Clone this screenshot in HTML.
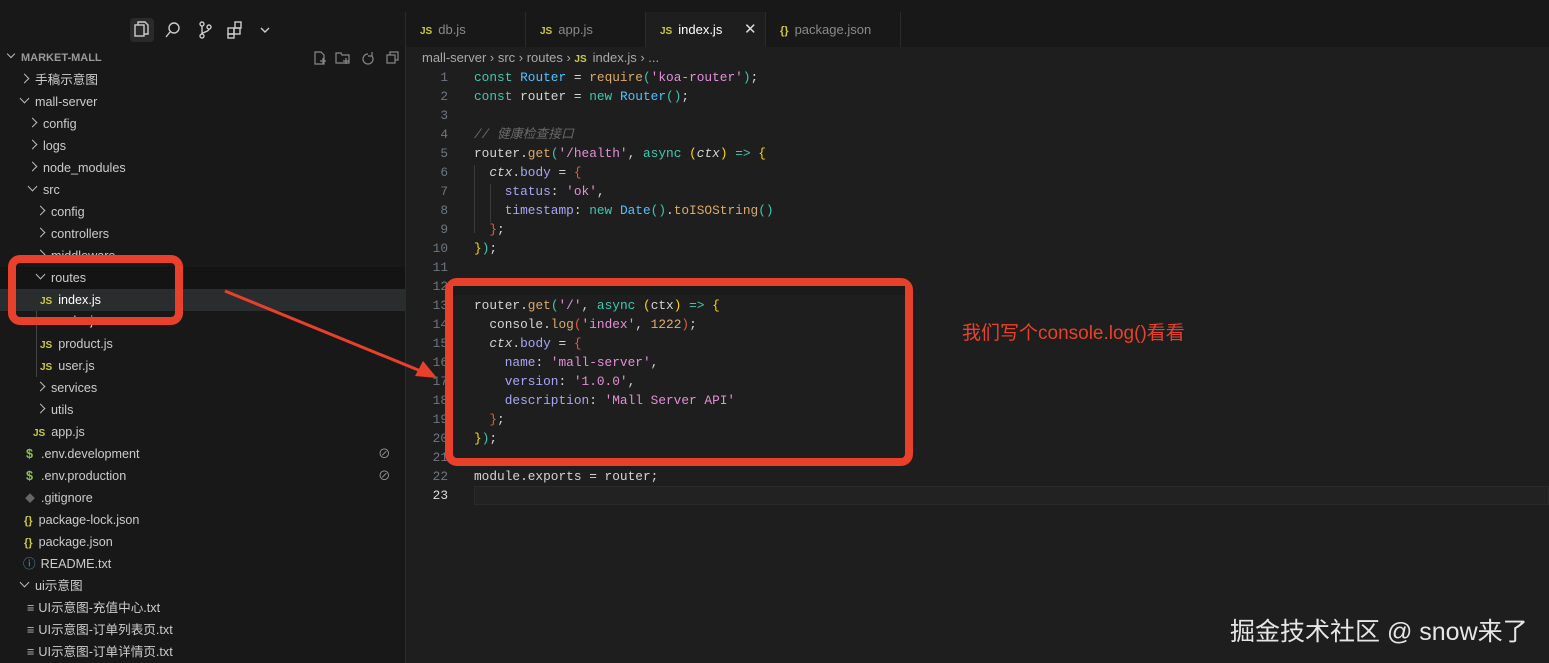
<!DOCTYPE html>
<html><head><meta charset="utf-8"><style>
body{margin:0;width:1549px;height:663px;overflow:hidden;background:#1e1e1e;font-family:"Liberation Sans","Noto Sans CJK SC",sans-serif;position:relative}
.abs{position:absolute}
#top{left:0;top:0;width:1549px;height:12px;background:#181818}
#side{left:0;top:12px;width:405px;height:651px;background:#181818;border-right:1px solid #2b2b2b;overflow:hidden}
.row{position:absolute;left:0;width:405px;box-sizing:border-box;height:22px;line-height:22px;font-size:12.6px;color:#cccccc;white-space:nowrap}
.chev{display:inline-block;width:6px;height:6px;border-right:1.3px solid #bbb;border-bottom:1.3px solid #bbb;margin-right:7px;vertical-align:2px}
.r{transform:rotate(-45deg)}.d{transform:rotate(45deg);vertical-align:4px}
.js{color:#cbcb41;font-weight:bold;font-size:10px;margin-right:6px}
.br{color:#cbcb41;font-weight:bold;font-size:11px;margin-right:6px}
#tabs{left:406px;top:12px;width:1143px;height:35px;background:#181818}
.tab{position:absolute;top:0;height:35px;line-height:35px;font-size:13px;color:#8a8a8a;border-right:1px solid #2b2b2b;box-sizing:border-box;padding-left:14px}
#code{left:406px;top:68px;font-family:"Liberation Mono",monospace;font-size:12.8px}
.ln{position:absolute;left:0;width:42px;text-align:right;color:#6e7681;height:19px;line-height:19px;font-family:"Liberation Mono",monospace;font-size:12.8px}
.cl{position:absolute;left:68px;height:19px;line-height:19px;color:#d4d4d4;white-space:pre;font-family:"Liberation Mono",monospace;font-size:12.8px}
.k{color:#3dc9b0}.t{color:#4fc1ff}.f{color:#dcaa6a}.s{color:#e48fd8}.p{color:#a6a6f7}.c{color:#6a6a6a;font-style:italic}.y{color:#ffd700}.g{color:#3dc9b0}.rd{color:#e45b3d}.n{color:#e0b070}.i{color:#d4d4d4;font-style:italic}
.box{position:absolute;border:8px solid #e8402a;border-radius:12px;box-sizing:border-box}
</style></head><body>
<div id="top" class="abs"></div>
<div id="side" class="abs">
 <div class="abs" style="left:130px;top:6px;width:24px;height:24px;background:#2a2a2a;border-radius:4px"></div>
 <svg class="abs" style="left:131px;top:8px" width="140" height="20" viewBox="0 0 140 20" fill="none" stroke="#ccc" stroke-width="1.4">
  <rect x="4" y="5" width="9" height="11"/><path d="M7 5V2h7l3 3v9h-4"/>
  <circle cx="43" cy="8" r="5"/><path d="M39 12l-4 5"/>
  <circle cx="71" cy="4" r="2"/><circle cx="71" cy="16" r="2"/><circle cx="78" cy="7" r="2"/><path d="M71 6v8M78 9c0 3-7 3-7 5"/>
  <rect x="97" y="8" width="6" height="6"/><rect x="103" y="8" width="6" height="6"/><rect x="97" y="14" width="6" height="4"/><rect x="104" y="2" width="6" height="6"/>
  <path d="M130 8l4 4 4-4"/>
 </svg>
 <div class="row" style="top:35px;font-size:11px;font-weight:bold;color:#999;padding-left:8px"><span class="chev d" style="width:5px;height:5px"></span>MARKET-MALL</div>
 <svg class="abs" style="left:312px;top:38px" width="90" height="16" fill="none" stroke="#888" stroke-width="1.2"><path d="M3 2h6l3 3v9H3zM8 11h6M11 8v6"/><path d="M24 3h5l1 2h7v8h-13zM31 11h6M34 8v6"/><path d="M56 4a5 5 0 1 0 4 2M60 2v4h-4"/><rect x="75" y="5" width="8" height="8"/><path d="M78 5V2h8v8h-3"/></svg>
 <div class="row" style="top:57px;padding-left:21px"><span class="chev r"></span>手稿示意图</div>
 <div class="row" style="top:79px;padding-left:21px"><span class="chev d"></span>mall-server</div>
 <div class="row" style="top:101px;padding-left:29px"><span class="chev r"></span>config</div>
 <div class="row" style="top:123px;padding-left:29px"><span class="chev r"></span>logs</div>
 <div class="row" style="top:145px;padding-left:29px"><span class="chev r"></span>node_modules</div>
 <div class="row" style="top:167px;padding-left:29px"><span class="chev d"></span>src</div>
 <div class="row" style="top:189px;padding-left:37px"><span class="chev r"></span>config</div>
 <div class="row" style="top:211px;padding-left:37px"><span class="chev r"></span>controllers</div>
 <div class="row" style="top:233px;padding-left:37px;height:10px;overflow:hidden"><span class="chev r"></span>middleware</div>
 <div class="row" style="top:255px;padding-left:37px;background:#141414"><span class="chev d"></span>routes</div>
 <div class="row" style="top:277px;padding-left:40px;background:#2a2d2e;color:#fff"><span class="js">JS</span>index.js</div>
 <div class="row" style="top:303px;padding-left:58px;height:14px;overflow:hidden;line-height:12px">order.js</div>
 <div class="abs" style="left:36px;top:299px;width:1px;height:66px;background:#444"></div>
 <div class="row" style="top:321px;padding-left:40px"><span class="js">JS</span>product.js</div>
 <div class="row" style="top:343px;padding-left:40px"><span class="js">JS</span>user.js</div>
 <div class="row" style="top:365px;padding-left:37px"><span class="chev r"></span>services</div>
 <div class="row" style="top:387px;padding-left:37px"><span class="chev r"></span>utils</div>
 <div class="row" style="top:409px;padding-left:33px"><span class="js">JS</span>app.js</div>
 <div class="row" style="top:431px;padding-left:26px"><span style="color:#8dc149;font-weight:bold;margin-right:8px">$</span>.env.development<span class="abs" style="left:378px;color:#999">⊘</span></div>
 <div class="row" style="top:453px;padding-left:26px"><span style="color:#8dc149;font-weight:bold;margin-right:8px">$</span>.env.production<span class="abs" style="left:378px;color:#999">⊘</span></div>
 <div class="row" style="top:475px;padding-left:25px"><span style="color:#666;margin-right:6px;font-size:10px">◆</span>.gitignore</div>
 <div class="row" style="top:497px;padding-left:24px"><span class="br">{}</span>package-lock.json</div>
 <div class="row" style="top:519px;padding-left:24px"><span class="br">{}</span>package.json</div>
 <div class="row" style="top:541px;padding-left:23px"><span style="color:#519aba;margin-right:5px">ⓘ</span>README.txt</div>
 <div class="row" style="top:563px;padding-left:21px"><span class="chev d"></span>ui示意图</div>
 <div class="row" style="top:585px;padding-left:27px"><span style="color:#bbb;margin-right:4px">≡</span>UI示意图-充值中心.txt</div>
 <div class="row" style="top:607px;padding-left:27px"><span style="color:#bbb;margin-right:4px">≡</span>UI示意图-订单列表页.txt</div>
 <div class="row" style="top:629px;padding-left:27px"><span style="color:#bbb;margin-right:4px">≡</span>UI示意图-订单详情页.txt</div>
</div>
<div id="tabs" class="abs">
 <div class="tab" style="left:0;width:120px"><span class="js">JS</span>db.js</div>
 <div class="tab" style="left:120px;width:120px"><span class="js">JS</span>app.js</div>
 <div class="tab" style="left:240px;width:120px;background:#1e1e1e;color:#fff">
  <span class="js">JS</span>index.js<span class="abs" style="left:98px;color:#ddd;font-size:15px">✕</span></div>
 <div class="tab" style="left:360px;width:135px"><span class="br">{}</span>package.json</div>
</div>
<div class="abs" style="left:422px;top:48px;font-size:13px;color:#a9a9a9;line-height:20px">mall-server › src › routes › <span class="js">JS</span>index.js › ...</div>
<div id="code" class="abs">
 <div class="ln" style="top:0">1</div><div class="cl" style="top:0"><span class="k">const</span> <span class="t">Router</span> = <span class="f">require</span><span class="g">(</span><span class="s">'koa-router'</span><span class="g">)</span>;</div>
 <div class="ln" style="top:19px">2</div><div class="cl" style="top:19px"><span class="k">const</span> router = <span class="k">new</span> <span class="t">Router</span><span class="g">()</span>;</div>
 <div class="ln" style="top:38px">3</div>
 <div class="ln" style="top:57px">4</div><div class="cl c" style="top:57px;font-family:'Liberation Mono','Noto Sans CJK SC',monospace">// 健康检查接口</div>
 <div class="ln" style="top:76px">5</div><div class="cl" style="top:76px">router.<span class="f">get</span><span class="g">(</span><span class="s">'/health'</span>, <span class="k">async</span> <span class="y">(</span><span class="i">ctx</span><span class="y">)</span> <span class="k">=&gt;</span> <span class="y">{</span></div>
 <div class="ln" style="top:95px">6</div><div class="cl" style="top:95px">  <span class="i">ctx</span>.<span class="p">body</span> = <span class="rd">{</span></div>
 <div class="ln" style="top:114px">7</div><div class="cl" style="top:114px">    <span class="p">status</span>: <span class="s">'ok'</span>,</div>
 <div class="ln" style="top:133px">8</div><div class="cl" style="top:133px">    <span class="p">timestamp</span>: <span class="k">new</span> <span class="t">Date</span><span class="g">()</span>.<span class="f">toISOString</span><span class="g">()</span></div>
 <div class="ln" style="top:152px">9</div><div class="cl" style="top:152px">  <span class="rd">}</span>;</div>
 <div class="ln" style="top:171px">10</div><div class="cl" style="top:171px"><span class="y">}</span><span class="g">)</span>;</div>
 <div class="ln" style="top:190px">11</div>
 <div class="ln" style="top:209px">12</div><div class="cl c" style="top:209px;font-family:'Liberation Mono','Noto Sans CJK SC',monospace">// 项目基本信息</div>
 <div class="ln" style="top:228px">13</div><div class="cl" style="top:228px">router.<span class="f">get</span><span class="g">(</span><span class="s">'/'</span>, <span class="k">async</span> <span class="y">(</span>ctx<span class="y">)</span> <span class="k">=&gt;</span> <span class="y">{</span></div>
 <div class="ln" style="top:247px">14</div><div class="cl" style="top:247px">  console.<span class="f">log</span><span class="rd">(</span><span class="s">'index'</span>, <span class="n">1222</span><span class="rd">)</span>;</div>
 <div class="ln" style="top:266px">15</div><div class="cl" style="top:266px">  <span class="i">ctx</span>.<span class="p">body</span> = <span class="rd">{</span></div>
 <div class="ln" style="top:285px">16</div><div class="cl" style="top:285px">    <span class="p">name</span>: <span class="s">'mall-server'</span>,</div>
 <div class="ln" style="top:304px">17</div><div class="cl" style="top:304px">    <span class="p">version</span>: <span class="s">'1.0.0'</span>,</div>
 <div class="ln" style="top:323px">18</div><div class="cl" style="top:323px">    <span class="p">description</span>: <span class="s">'Mall Server API'</span></div>
 <div class="ln" style="top:342px">19</div><div class="cl" style="top:342px">  <span class="rd">}</span>;</div>
 <div class="ln" style="top:361px">20</div><div class="cl" style="top:361px"><span class="y">}</span><span class="g">)</span>;</div>
 <div class="ln" style="top:380px">21</div>
 <div class="ln" style="top:399px">22</div><div class="cl" style="top:399px">module.exports = router;</div>
 <div class="abs" style="left:68px;top:418px;width:1075px;height:19px;border:1px solid #2a2a2a;box-sizing:border-box;background:#222"></div>
 <div class="ln" style="top:418px;color:#ddd">23</div>
</div>
<div class="abs" style="left:474px;top:165px;width:1px;height:68px;background:#3a3a3a"></div>
<div class="abs" style="left:490px;top:184px;width:1px;height:38px;background:#3a3a3a"></div>
<div class="box" style="left:8px;top:255px;width:175px;height:70px"></div>
<div class="box" style="left:445px;top:278px;width:468px;height:188px;background:transparent"></div>
<div class="abs" style="left:453px;top:286px;width:452px;height:9px;background:#1a1a1a"></div>
<svg class="abs" style="left:0;top:0" width="1549" height="663"><line x1="225" y1="291" x2="428" y2="374" stroke="#e8402a" stroke-width="3"/><path d="M437 378l-22-2 8-15z" fill="#e8402a"/></svg>
<div class="abs" style="left:962px;top:318px;font-size:19px;color:#e8412c">我们写个console.log()看看</div>
<div class="abs" style="left:1230px;top:612px;font-size:25px;color:#e6e6e6">掘金技术社区 @ snow来了</div>
</body></html>
